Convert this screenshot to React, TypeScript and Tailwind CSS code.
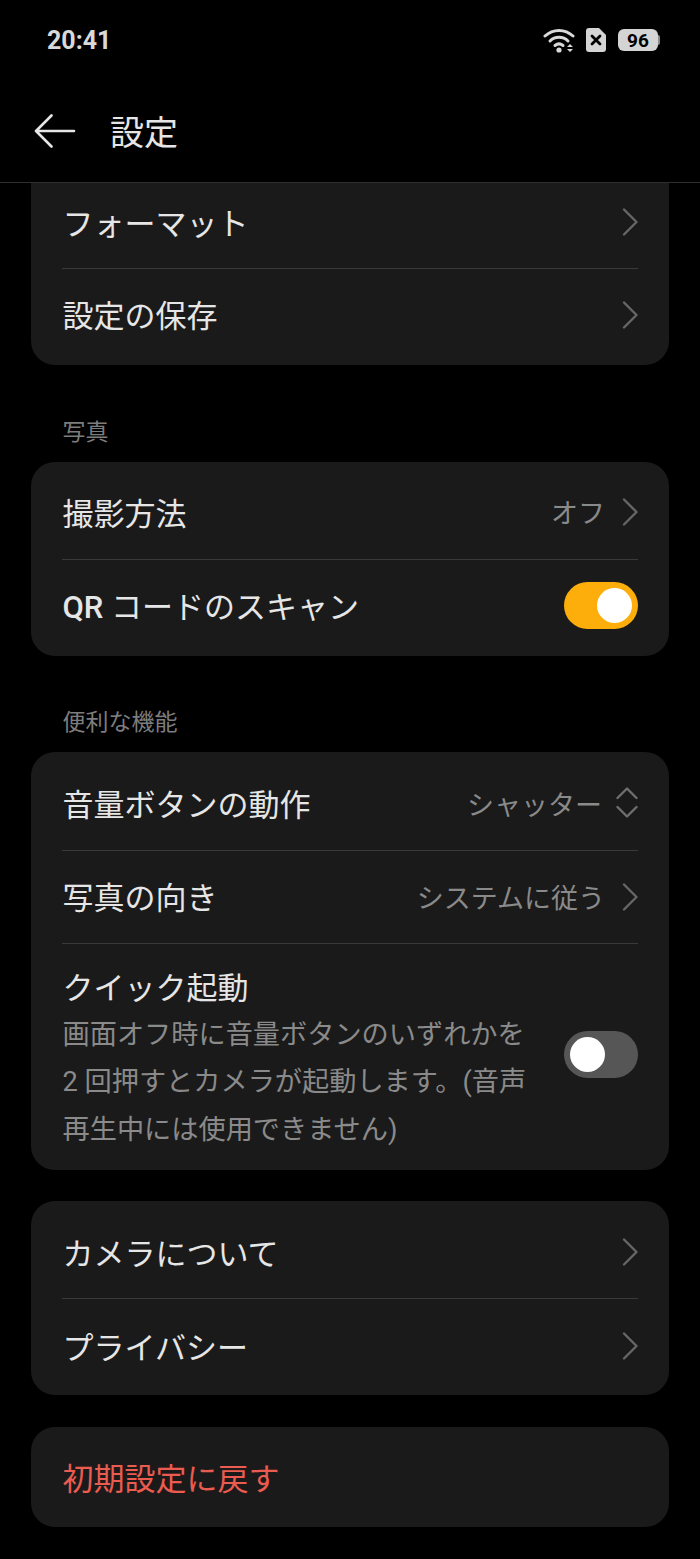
const font = { fontFamily: 'Roboto, "Noto Sans CJK JP", "Noto Sans", sans-serif' };

function Chevron({ className = "" }: { className?: string }) {
  return (
    <svg width="16" height="30" viewBox="0 0 16 30" fill="none" className={`ml-[3px] shrink-0 ${className}`}>
      <path d="M2 2.5 L14.5 15 L2 27.5" stroke="#666666" strokeWidth="2.4" strokeLinecap="round" strokeLinejoin="round" />
    </svg>
  );
}

function UpDown() {
  return (
    <svg width="22" height="32" viewBox="0 0 22 32" fill="none" className="shrink-0">
      <path d="M1.5 11 L11 1.5 L20.5 11" stroke="#6e6e6e" strokeWidth="2.4" strokeLinecap="round" strokeLinejoin="round" />
      <path d="M1.5 20 L11 29.5 L20.5 20" stroke="#6e6e6e" strokeWidth="2.4" strokeLinecap="round" strokeLinejoin="round" />
    </svg>
  );
}

function Toggle({ on }: { on: boolean }) {
  return (
    <div className={on ? "flex h-[47px] w-[74px] shrink-0 items-center justify-end rounded-full bg-[#fdae0a] pr-[6px]" : "flex h-[47px] w-[74px] shrink-0 items-center justify-start rounded-full bg-[#565656] pl-[6px]"}>
      <div className="h-[35px] w-[35px] rounded-full bg-white" />
    </div>
  );
}

function Row({ label, value, icon, height, line, red }: { label: React.ReactNode; value?: string; icon?: React.ReactNode; height: string; line?: boolean; red?: boolean }) {
  return (
    <div className={`flex items-center justify-between ${height} ${line ? "border-b border-[#3a3a3a]" : ""}`}>
      <span className={red ? "pl-[0.5px] pt-[5px] text-[31px] leading-none text-[#ea5b50]" : "pl-[0.5px] pt-[5px] text-[31px] leading-none text-[#e6e6e6]"}>{label}</span>
      <div className="flex items-center gap-[14px]">
        {value && <span className="pt-[6px] text-[27px] leading-none text-[#8a8a8a]">{value}</span>}
        {icon}
      </div>
    </div>
  );
}

function Card({ children, className = "" }: { children: React.ReactNode; className?: string }) {
  return <div className={`mx-[31px] rounded-[24px] bg-[#1a1a1a] px-[31px] ${className}`}>{children}</div>;
}

function Section({ label, height }: { label: string; height: string }) {
  return <div className={`flex items-end px-[62.5px] pb-[14px] text-[23px] leading-[30px] text-[#7d7d7d] ${height}`}>{label}</div>;
}

export default function App() {
  return (
    <div className="h-[1559px] w-[700px] overflow-hidden bg-black" style={font}>
      <div className="flex h-[80px] items-center justify-between pl-[47px] pr-[40px]">
        <span className="text-[25px] font-bold leading-none text-[#d9d9d9]">20:41</span>
        <div className="flex items-center gap-[9px]">
          <svg width="34" height="26" viewBox="0 0 34 26" fill="none">
            <path d="M2 9 C10 1.5 22 1.5 30 9" stroke="#d9d9d9" strokeWidth="3" strokeLinecap="round" />
            <path d="M7 14 C12 9 20 9 25 14" stroke="#d9d9d9" strokeWidth="3" strokeLinecap="round" />
            <path d="M12 18.5 C14.5 16.5 17.5 16.5 20 18.5" stroke="#d9d9d9" strokeWidth="3" strokeLinecap="round" />
            <circle cx="16" cy="23" r="2.6" fill="#d9d9d9" />
            <path d="M27 17 L30 20 H24 Z M24 22 H30 L27 25 Z" fill="#d9d9d9" />
          </svg>
          <svg width="20" height="24" viewBox="0 0 20 24">
            <path d="M3 0 H13 L20 7 V21 A3 3 0 0 1 17 24 H3 A3 3 0 0 1 0 21 V3 A3 3 0 0 1 3 0 Z" fill="#d4d4d4" />
            <path d="M6 8 L14 16 M14 8 L6 16" stroke="#000" strokeWidth="2.8" strokeLinecap="round" />
          </svg>
          <div className="ml-[3px] flex items-center">
            <div className="flex h-[22px] w-[40px] items-center justify-center rounded-[6px] bg-[#d4d4d4] text-[19px] font-bold leading-none text-black">96</div>
            <div className="h-[10px] w-[2px] rounded-r-sm bg-[#8a8a8a]" />
          </div>
        </div>
      </div>

      <div className="flex h-[103px] items-center border-b border-[#2e2e2e]">
        <svg width="42" height="34" viewBox="0 0 42 34" fill="none" className="ml-[34px]">
          <path d="M40 17 H2 M17.5 1.5 L2 17 L17.5 32.5" stroke="#e6e6e6" strokeWidth="2.6" strokeLinecap="round" strokeLinejoin="round" />
        </svg>
        <span className="ml-[34px] pt-[4px] text-[34px] leading-none text-[#e6e6e6]">設定</span>
      </div>

      <Card className="rounded-t-none">
        <Row label="フォーマット" icon={<Chevron />} height="h-[86px] pb-[7px]" line />
        <Row label="設定の保存" icon={<Chevron className="mt-[2px]" />} height="h-[96px] pb-[6px]" />
      </Card>

      <Section label="写真" height="h-[97px]" />
      <Card>
        <Row label="撮影方法" value="オフ" icon={<Chevron />} height="h-[98px] pt-[2px]" line />
        <Row label={<><span className="font-medium">QR</span> コードのスキャン</>} icon={<Toggle on />} height="h-[96px] pb-[6px]" />
      </Card>

      <Section label="便利な機能" height="h-[96px]" />
      <Card>
        <Row label="音量ボタンの動作" value="シャッター" icon={<UpDown />} height="h-[99px] pt-[4px]" line />
        <Row label="写真の向き" value="システムに従う" icon={<Chevron className="mt-[2px]" />} height="h-[93px] pb-[2px]" line />
        <div className="flex h-[226px] items-center justify-between">
          <div className="w-[472px] pl-[0.5px] pt-[10px]">
            <div className="mb-[4px] text-[31px] leading-[38px] text-[#e6e6e6]">クイック起動</div>
            <div className="text-[27.2px] leading-[47.5px] text-[#8a8a8a]">画面オフ時に音量ボタンのいずれかを 2 回押すとカメラが起動します。(音声再生中には使用できません)</div>
          </div>
          <div className="pb-[6px]">
            <Toggle on={false} />
          </div>
        </div>
      </Card>

      <Card className="mt-[31px]">
        <Row label="カメラについて" icon={<Chevron />} height="h-[98px] pt-[4px]" line />
        <Row label="プライバシー" icon={<Chevron />} height="h-[96px] pb-[2px]" />
      </Card>

      <Card className="mt-[32px]">
        <Row label="初期設定に戻す" height="h-[100px]" red />
      </Card>
    </div>
  );
}
